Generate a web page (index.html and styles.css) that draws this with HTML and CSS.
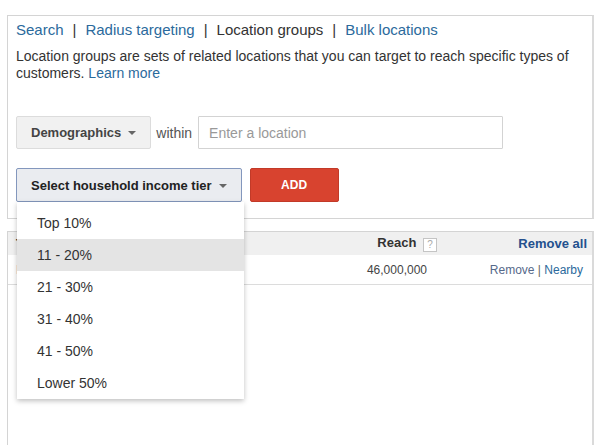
FILE: index.html
```html
<!DOCTYPE html>
<html lang="en">
<head>
    <meta charset="UTF-8">
    <meta name="viewport" content="width=device-width, initial-scale=1.0">
    <title>Location groups</title>
    <link rel="stylesheet" href="styles.css">
</head>
<body>
    <div class="page">
        <section class="panel targeting">
            <nav class="tabs">
                <a href="#">Search</a><span class="sep">|</span><a href="#">Radius targeting</a><span class="sep">|</span><span class="current">Location groups</span><span class="sep">|</span><a href="#">Bulk locations</a>
            </nav>
            <p class="desc">Location groups are sets of related locations that you can target to reach specific types of<br>customers. <a href="#">Learn more</a></p>
            <div class="form-row">
                <button class="btn-select">Demographics <span class="caret"></span></button>
                <span class="within">within</span>
                <input type="text" class="location-input" placeholder="Enter a location">
            </div>
            <div class="form-row second">
                <div class="menu-wrap">
                    <button class="btn-select focused">Select household income tier <span class="caret"></span></button>
                    <ul class="menu">
                        <li>Top 10%</li>
                        <li class="hover">11 - 20%</li>
                        <li>21 - 30%</li>
                        <li>31 - 40%</li>
                        <li>41 - 50%</li>
                        <li>Lower 50%</li>
                    </ul>
                </div>
                <button class="btn-add">ADD</button>
            </div>
        </section>

        <section class="panel results">
            <div class="table-row table-head">
                <span class="col-name">Targeted locations</span>
                <span class="col-reach">Reach <span class="help">?</span></span>
                <span class="col-actions"><a href="#" class="remove-all">Remove all</a></span>
            </div>
            <div class="table-row">
                <span class="col-name"><a href="#">Household income: 11 - 20%</a></span>
                <span class="col-reach value">46,000,000</span>
                <span class="col-actions small"><a href="#" class="muted">Remove</a> | <a href="#">Nearby</a></span>
            </div>
        </section>
    </div>
</body>
</html>
```

FILE: styles.css
```css
body {
    margin: 0;
    background: #fff;
    font-family: "Liberation Sans", Arial, sans-serif;
    color: #333;
    overflow: hidden;
}
a {
    color: #2b6a9c;
    text-decoration: none;
}
.page {
    padding: 15px 6px 0 7px;
}
.panel {
    border: 1px solid #d4d4d4;
    border-right: 2px solid #dadada;
}
.targeting {
    padding: 5px 8px 16px 8px;
}
.tabs {
    font-size: 15px;
    line-height: 18px;
}
.tabs .sep {
    margin: 0 9px;
}
.desc {
    margin: 9px 0 0;
    font-size: 14px;
    line-height: 17px;
}
.form-row {
    display: flex;
    align-items: center;
    margin-top: 34px;
}
.form-row.second {
    margin-top: 19px;
    align-items: flex-start;
}
.btn-select {
    font-family: inherit;
    font-size: 13px;
    font-weight: bold;
    color: #444;
    background: #f1f1f1;
    border: 1px solid #dcdcdc;
    border-radius: 2px;
    height: 33px;
    padding: 0 14px 0 14px;
    display: flex;
    align-items: center;
    gap: 7px;
}
.btn-select.focused {
    background: #eaecf0;
    border-color: #8397bd;
    color: #222;
    height: 34px;
}
.caret {
    width: 0;
    height: 0;
    border-left: 4px solid transparent;
    border-right: 4px solid transparent;
    border-top: 4px solid #666;
    margin-top: 1px;
}
.within {
    font-size: 14px;
    color: #555;
    margin: 0 6px 0 5px;
}
.location-input {
    font-family: inherit;
    font-size: 14px;
    width: 305px;
    height: 33px;
    box-sizing: border-box;
    padding: 0 10px;
    border: 1px solid #d3d3d3;
    border-radius: 1px;
}
.location-input::placeholder {
    color: #999;
}
.menu-wrap {
    position: relative;
}
.menu {
    position: absolute;
    top: 34px;
    left: 1px;
    z-index: 10;
    width: 227px;
    margin: 0;
    padding: 5px 0 0;
    list-style: none;
    background: #fff;
    box-shadow: 0 2px 5px rgba(0, 0, 0, 0.25);
}
.menu li {
    font-size: 14px;
    line-height: 32px;
    padding-left: 20px;
    color: #333;
}
.menu li.hover {
    background: #e4e4e4;
}
.btn-add {
    font-family: inherit;
    font-size: 12px;
    font-weight: bold;
    color: #fff;
    background: #d8432f;
    border: 1px solid #c23a28;
    border-radius: 2px;
    width: 89px;
    height: 34px;
    margin-left: 8px;
}
.results {
    margin-top: 12px;
    height: 220px;
    border-bottom: none;
}
.table-row {
    display: grid;
    grid-template-columns: 1fr 130px 150px;
    align-items: center;
    padding: 0 5px 0 8px;
    height: 29px;
    border-bottom: 1px solid #dcdcdc;
    font-size: 12px;
}
.table-head {
    height: 23px;
    background: #f0f0f0;
    border-bottom: none;
    font-size: 13px;
    font-weight: bold;
}
.col-reach {
    text-align: right;
}
.col-reach.value {
    padding-right: 10px;
}
.col-actions {
    text-align: right;
}
.col-actions.small {
    padding-right: 4px;
    color: #666;
}
.help {
    display: inline-block;
    width: 12px;
    height: 12px;
    line-height: 12px;
    border: 1px solid #c4c4c4;
    background: #fff;
    color: #aaa;
    font-size: 10px;
    font-weight: normal;
    text-align: center;
    margin-left: 3px;
    vertical-align: -1px;
}
.remove-all {
    color: #24508e;
}
.muted {
    color: #56698a;
}
.value {
    color: #444;
}
```
